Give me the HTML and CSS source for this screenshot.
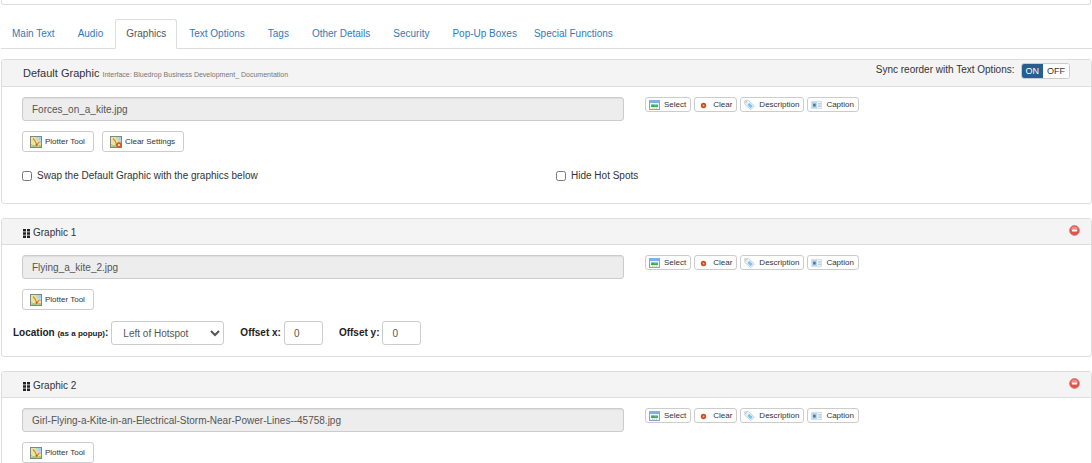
FILE: index.html
```html
<!DOCTYPE html>
<html lang="en">
<head>
<meta charset="utf-8">
<title>Graphics</title>
<link rel="stylesheet" href="styles.css">
</head>
<body>
<svg class="sprite" width="0" height="0" aria-hidden="true">
  <symbol id="i-select" viewBox="0 0 11 10">
    <rect x=".5" y=".5" width="10" height="9" fill="#eef5fb" stroke="#7da7d2"/>
    <rect width="11" height="3" fill="#7fb0e6"/>
    <rect x="2" y="4" width="7" height="3" fill="#8ed1d6"/>
    <path d="M2 5.5 4 4.5 6 5.5 9 5V7H2Z" fill="#3fae49"/>
    <path d="M3 8.2h1M7 8.2h1" stroke="#e79a86" stroke-width=".8"/>
    <path d="M5 8.2h1" stroke="#d8ce62" stroke-width=".8"/>
  </symbol>
  <symbol id="i-clear" viewBox="0 0 11 10">
    <circle cx="5.5" cy="5.5" r="2.7" fill="#cf4b1e"/>
    <circle cx="5.5" cy="5.5" r="1" fill="#f6b08c"/>
  </symbol>
  <symbol id="i-tag" viewBox="0 0 11 10">
    <path d="M.6.8 4.5.5 10.4 6 7 9.6 1 4.5Z" fill="#f4f8fb" stroke="#afbfca" stroke-width=".7"/>
    <path d="M5.2 2.8 8.8 6 6.7 8.2 3.3 5Z" fill="#7cc4ef"/>
    <circle cx="2.3" cy="2.2" r=".8" fill="#fff" stroke="#9badb8" stroke-width=".5"/>
  </symbol>
  <symbol id="i-caption" viewBox="0 0 11 8">
    <rect x=".4" y=".4" width="10.2" height="7.2" rx=".5" fill="#eef4f8" stroke="#c9d6df" stroke-width=".8"/>
    <path d="M1 1h5v6H1Z" fill="#b4d6ef"/>
    <rect x="2.2" y="2.7" width="2.4" height="2.8" fill="#4d6f90"/>
    <path d="M7 2.5h3M7 4h3M7 5.5h3" stroke="#a3b4c1" stroke-width=".6"/>
  </symbol>
  <symbol id="i-plot" viewBox="0 0 12 12">
    <rect x=".5" y=".5" width="11" height="11" fill="#e6e79c" stroke="#7d8c76"/>
    <path d="M6 1h5v6L8 7Z" fill="#a5cdf0"/>
    <path d="M1 8 5 9.5l3-1 3 1V11H1Z" fill="#9cc878"/>
    <path d="M1 3h3M8 1v10M1 10 11 4" stroke="#f6efc0" stroke-width=".6"/>
    <path d="M3 2.5 5.2 5 6.6 8.8 9.2 6" fill="none" stroke="#e4832c" stroke-width="1.2"/>
    <circle cx="6.6" cy="8.8" r="1" fill="#dc4a2b"/>
  </symbol>
  <symbol id="i-plot-clear" viewBox="0 0 12 12">
    <use href="#i-plot"/>
    <circle cx="9" cy="9" r="2.7" fill="#e25a1c"/>
    <path d="m8.1 8.1 1.8 1.8m0-1.8L8.1 9.9" stroke="#fff" stroke-width=".8"/>
  </symbol>
  <symbol id="i-grip" viewBox="0 0 7 9">
    <path d="M0 0h3v2.4H0ZM4 0h3v2.4H4ZM0 3.3h3v2.4H0ZM4 3.3h3v2.4H4ZM0 6.6h3V9H0ZM4 6.6h3V9H4Z" fill="#222"/>
  </symbol>
  <symbol id="i-remove" viewBox="0 0 11 11">
    <circle cx="5.5" cy="5.5" r="4.9" fill="#e1524d" stroke="#d9766f" stroke-width=".8"/>
    <path d="M1.8 4.5a3.8 3.8 0 0 1 7.4 0Z" fill="#f08b84"/>
    <rect x="2.8" y="4.6" width="5.4" height="1.9" rx=".4" fill="#fff"/>
  </symbol>
</svg>

<div class="upper-box"></div>

<nav class="tabs">
  <a class="tab" href="#">Main Text</a>
  <a class="tab" href="#">Audio</a>
  <a class="tab active" href="#" aria-current="page">Graphics</a>
  <a class="tab" href="#">Text Options</a>
  <a class="tab" href="#">Tags</a>
  <a class="tab" href="#">Other Details</a>
  <a class="tab" href="#">Security</a>
  <a class="tab" href="#">Pop-Up Boxes</a>
  <a class="tab last" href="#">Special Functions</a>
</nav>

<main class="panels">
  <section class="panel">
    <header class="panel-head">
      <h2 class="title">Default Graphic <small class="sub">Interface: Bluedrop Business Development_ Documentation</small></h2>
      <div class="sync">
        <span>Sync reorder with Text Options:</span>
        <div class="toggle"><button class="toggle-btn on" type="button">ON</button><button class="toggle-btn" type="button">OFF</button></div>
      </div>
    </header>
    <div class="panel-body">
      <div class="file-row">
        <input class="field file" type="text" value="Forces_on_a_kite.jpg" aria-label="Default graphic file" readonly>
        <div class="actions">
          <button class="btn mini" type="button"><svg class="ico"><use href="#i-select"/></svg>Select</button>
          <button class="btn mini" type="button"><svg class="ico"><use href="#i-clear"/></svg>Clear</button>
          <button class="btn mini" type="button"><svg class="ico"><use href="#i-tag"/></svg>Description</button>
          <button class="btn mini" type="button"><svg class="ico"><use href="#i-caption"/></svg>Caption</button>
        </div>
      </div>
      <div class="tools">
        <button class="btn" type="button"><svg class="ico-lg"><use href="#i-plot"/></svg>Plotter Tool</button>
        <button class="btn" type="button"><svg class="ico-lg"><use href="#i-plot-clear"/></svg>Clear Settings</button>
      </div>
      <div class="checks">
        <label class="check"><input class="box" type="checkbox">Swap the Default Graphic with the graphics below</label>
        <label class="check"><input class="box" type="checkbox">Hide Hot Spots</label>
      </div>
    </div>
  </section>

  <section class="panel">
    <header class="panel-head item-head">
      <h3 class="item-title"><svg class="grip"><use href="#i-grip"/></svg>Graphic 1</h3>
      <button class="remove" type="button" aria-label="Remove Graphic 1"><svg class="remove-ico"><use href="#i-remove"/></svg></button>
    </header>
    <div class="panel-body">
      <div class="file-row">
        <input class="field file" type="text" value="Flying_a_kite_2.jpg" aria-label="Graphic 1 file" readonly>
        <div class="actions">
          <button class="btn mini" type="button"><svg class="ico"><use href="#i-select"/></svg>Select</button>
          <button class="btn mini" type="button"><svg class="ico"><use href="#i-clear"/></svg>Clear</button>
          <button class="btn mini" type="button"><svg class="ico"><use href="#i-tag"/></svg>Description</button>
          <button class="btn mini" type="button"><svg class="ico"><use href="#i-caption"/></svg>Caption</button>
        </div>
      </div>
      <div class="tools">
        <button class="btn" type="button"><svg class="ico-lg"><use href="#i-plot"/></svg>Plotter Tool</button>
      </div>
    </div>
    <div class="placement">
      <div class="pair">
        <label for="loc">Location <small class="hint">(as a popup)</small>:</label>
        <select class="field location" id="loc"><option>Left of Hotspot</option></select>
      </div>
      <div class="pair">
        <label for="ox">Offset x:</label>
        <input class="field offset" id="ox" type="text" value="0">
      </div>
      <div class="pair">
        <label for="oy">Offset y:</label>
        <input class="field offset" id="oy" type="text" value="0">
      </div>
    </div>
  </section>

  <section class="panel">
    <header class="panel-head item-head">
      <h3 class="item-title"><svg class="grip"><use href="#i-grip"/></svg>Graphic 2</h3>
      <button class="remove" type="button" aria-label="Remove Graphic 2"><svg class="remove-ico"><use href="#i-remove"/></svg></button>
    </header>
    <div class="panel-body">
      <div class="file-row">
        <input class="field file" type="text" value="Girl-Flying-a-Kite-in-an-Electrical-Storm-Near-Power-Lines--45758.jpg" aria-label="Graphic 2 file" readonly>
        <div class="actions">
          <button class="btn mini" type="button"><svg class="ico"><use href="#i-select"/></svg>Select</button>
          <button class="btn mini" type="button"><svg class="ico"><use href="#i-clear"/></svg>Clear</button>
          <button class="btn mini" type="button"><svg class="ico"><use href="#i-tag"/></svg>Description</button>
          <button class="btn mini" type="button"><svg class="ico"><use href="#i-caption"/></svg>Caption</button>
        </div>
      </div>
      <div class="tools">
        <button class="btn" type="button"><svg class="ico-lg"><use href="#i-plot"/></svg>Plotter Tool</button>
      </div>
    </div>
  </section>
</main>
</body>
</html>
```
FILE: styles.css
```css
* { box-sizing: border-box; }
html { overflow: hidden; }
body {
  margin: 0;
  background: #fff;
  color: #333;
  font: 10px/14px "Liberation Sans", Arial, sans-serif;
}
button, input, select { font: inherit; color: inherit; margin: 0; }
.sprite { display: block; height: 0; }

.upper-box {
  height: 5px;
  margin: 0 1px;
  border: 1px solid #ddd;
  border-top: 0;
  border-radius: 0 0 3px 3px;
}

.tabs {
  display: flex;
  gap: 1px;
  margin: 14px 0 0 1px;
  border-bottom: 1px solid #ddd;
}
.tab {
  padding: 7px 10px;
  margin-bottom: -1px;
  border: 1px solid transparent;
  border-radius: 3px 3px 0 0;
  color: #337ab7;
  text-decoration: none;
}
.tab.active {
  border-color: #ddd #ddd #fff;
  background: #fff;
  color: #555;
}
.tab.last { padding-left: 4px; }

.panels {
  display: flex;
  flex-direction: column;
  gap: 14px;
  padding: 10px 0 0 1px;
}
.panel {
  border: 1px solid #ddd;
  border-radius: 3px;
}
.panel-head {
  display: flex;
  justify-content: space-between;
  align-items: flex-start;
  min-height: 27px;
  padding: 3px 21px 0;
  background: #f4f4f4;
  border-bottom: 1px solid #ddd;
}
.item-head { min-height: 26px; padding-right: 11px; }
.title { margin: 3px 0 0; font-size: 11px; line-height: 14px; font-weight: 400; }
.sub { font-size: 7px; color: #777; }
.sync { display: flex; align-items: flex-start; gap: 6px; }
.toggle {
  display: flex;
  border: 1px solid #ccc;
  border-radius: 3px;
  background: #fff;
  overflow: hidden;
}
.toggle-btn {
  padding: 0 4px;
  border: 0;
  background: #fff;
  font-size: 9px;
  line-height: 14px;
}
.toggle-btn.on { background: #245f8f; color: #fff; }

.item-title {
  display: flex;
  align-items: center;
  gap: 3px;
  margin: 4px 0 0;
  font-size: 10px;
  font-weight: 400;
}
.grip { width: 7px; height: 9px; }
.remove { padding: 3px 0 0; border: 0; background: none; line-height: 0; }
.remove-ico { width: 11px; height: 11px; }

.panel-body { padding: 10px 20px; }
.file-row {
  display: grid;
  grid-template-columns: 602fr 426fr;
  column-gap: 21px;
  align-items: start;
}
.field {
  height: 24px;
  padding: 0 9px;
  border: 1px solid #ccc;
  border-radius: 3px;
  background: #fff;
  color: #555;
}
.file { width: 100%; background: #ededed; box-shadow: inset 0 1px 1px #ddd; }
.actions { display: flex; gap: 3px; }
.tools { display: flex; gap: 8px; margin-top: 10px; }
.btn {
  display: flex;
  align-items: center;
  gap: 3px;
  padding: 3px 8px 3px 7px;
  border: 1px solid #ccc;
  border-radius: 3px;
  background: #fff;
  font-size: 8px;
  line-height: 13px;
}
.mini { padding: 0 4px 0 3px; gap: 4px; }
.ico { width: 11px; height: 10px; }
.ico-lg { width: 12px; height: 12px; }

.checks {
  display: grid;
  grid-template-columns: 534fr 515fr;
  margin: 17px 0 10px;
}
.check { display: flex; align-items: center; gap: 5px; }
.box { width: 10px; height: 10px; }

.placement {
  display: flex;
  gap: 16px;
  padding: 1px 11px 11px;
  color: #222;
  font-weight: 700;
}
.pair { display: flex; align-items: center; gap: 3px; }
.hint { font-size: 8px; }
.location { width: 113px; font-weight: 400; padding: 0 3px 0 7px; }
.offset { width: 39px; font-weight: 400; }
```
